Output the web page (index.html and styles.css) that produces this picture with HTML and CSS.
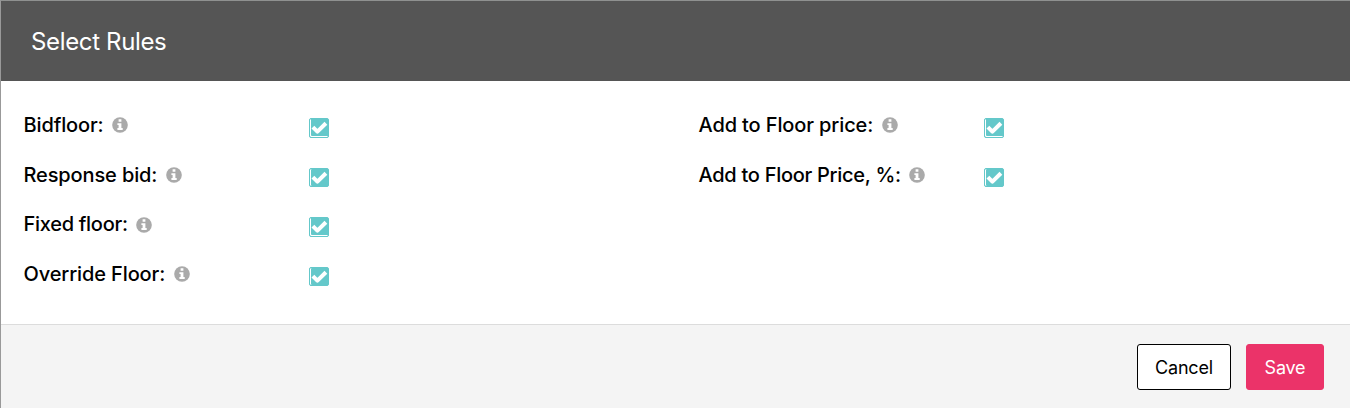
FILE: index.html
```
<!DOCTYPE html>
<html lang="en">
<head>
    <meta charset="UTF-8">
    <meta name="viewport" content="width=device-width, initial-scale=1.0">
    <title>Select Rules</title>
    <link rel="stylesheet" href="styles.css">
</head>
<body>
<svg class="sprite" aria-hidden="true">
    <symbol id="icon-info" viewBox="0 0 16 16">
        <circle cx="8" cy="8" r="7.8" fill="#aaa"/>
        <path fill="#fff" d="M6.6 2.3h2.8v2.5H6.6zM5.4 6.2h4v4.9h1.3v1.9H5.4v-1.9h1.2V8.1H5.4z"/>
    </symbol>
    <symbol id="icon-check" viewBox="0 0 18 18">
        <path fill="none" stroke="#fff" stroke-width="4" stroke-linejoin="round" d="M2.9 8.1l4.5 4.5L15.9 4.3"/>
    </symbol>
</svg>
<div class="modal">
    <header class="modal-header">
        <h1>Select Rules</h1>
    </header>
    <main class="modal-body">
        <div class="column">
            <div class="rule">
                <label for="bidfloor">Bidfloor:</label>
                <svg class="info"><use href="#icon-info"/></svg>
                <button class="checkbox" id="bidfloor" role="checkbox" aria-checked="true"><svg><use href="#icon-check"/></svg></button>
            </div>
            <div class="rule">
                <label for="response">Response bid:</label>
                <svg class="info"><use href="#icon-info"/></svg>
                <button class="checkbox" id="response" role="checkbox" aria-checked="true"><svg><use href="#icon-check"/></svg></button>
            </div>
            <div class="rule">
                <label class="tight" for="fixed">Fixed floor:</label>
                <svg class="info"><use href="#icon-info"/></svg>
                <button class="checkbox" id="fixed" role="checkbox" aria-checked="true"><svg><use href="#icon-check"/></svg></button>
            </div>
            <div class="rule">
                <label for="override">Override Floor:</label>
                <svg class="info"><use href="#icon-info"/></svg>
                <button class="checkbox" id="override" role="checkbox" aria-checked="true"><svg><use href="#icon-check"/></svg></button>
            </div>
        </div>
        <div class="column">
            <div class="rule">
                <label for="add">Add to Floor price:</label>
                <svg class="info"><use href="#icon-info"/></svg>
                <button class="checkbox" id="add" role="checkbox" aria-checked="true"><svg><use href="#icon-check"/></svg></button>
            </div>
            <div class="rule">
                <label class="tight" for="percent">Add to Floor Price, %:</label>
                <svg class="info"><use href="#icon-info"/></svg>
                <button class="checkbox" id="percent" role="checkbox" aria-checked="true"><svg><use href="#icon-check"/></svg></button>
            </div>
        </div>
    </main>
    <footer class="modal-footer">
        <button class="btn">Cancel</button>
        <button class="btn btn-save">Save</button>
    </footer>
</div>
</body>
</html>
```
FILE: styles.css
```
* {
    box-sizing: border-box;
}

body {
    margin: 0;
    font-family: Inter, "Liberation Sans", sans-serif;
    color: #000;
    background: #fff;
}

.sprite {
    display: none;
}

.modal {
    display: flex;
    flex-direction: column;
    height: 408px;
    border-top: 1px solid #8f9190;
    border-left: 1px solid #999;
    overflow: hidden;
}

.modal-header {
    display: flex;
    align-items: center;
    height: 80px;
    padding: 1px 30px 0;
    background: #555;
}

.modal-header h1 {
    margin: 0;
    color: #fff;
    font-size: 24px;
    font-weight: 400;
    letter-spacing: -0.35px;
}

.modal-body {
    display: grid;
    grid-template-columns: 675px 1fr;
    height: 243px;
    padding: 19px 0 0 22.5px;
}

.rule {
    display: flex;
    align-items: center;
    width: 305.5px;
    height: 49.7px;
}

.rule label {
    font-size: 20px;
    font-weight: 500;
    letter-spacing: -0.12px;
    white-space: nowrap;
}

.rule .tight {
    letter-spacing: -0.28px;
}

.info {
    width: 16px;
    height: 16px;
    margin: 1px 0 0 8.5px;
}

.checkbox {
    display: flex;
    align-self: flex-start;
    width: 20px;
    height: 20px;
    margin: 18px 0 0 auto;
    padding: 0;
    border: 1px solid #64c8ca;
    border-radius: 2px;
    background: #64c8ca;
    box-shadow: inset 1px -1px #fff;
}

.rule:nth-child(even) .checkbox {
    height: 19px;
    box-shadow: inset 1px 0 #fff;
}

.checkbox svg {
    flex: none;
    width: 18px;
    height: 18px;
}

.modal-footer {
    display: flex;
    flex: 1;
    gap: 15px;
    justify-content: flex-end;
    padding: 19px 26px 0 0;
    border-top: 1px solid #dcdcdc;
    background: #f4f4f4;
}

.btn {
    width: 94px;
    height: 46px;
    padding: 1px 0;
    border: 1px solid #000;
    border-radius: 3px;
    background: #fff;
    color: #000;
    font-family: inherit;
    font-size: 18px;
    letter-spacing: -0.2px;
}

.btn-save {
    width: 78px;
    border-color: #eb3369;
    background: #eb3369;
    color: #fff;
}
```
